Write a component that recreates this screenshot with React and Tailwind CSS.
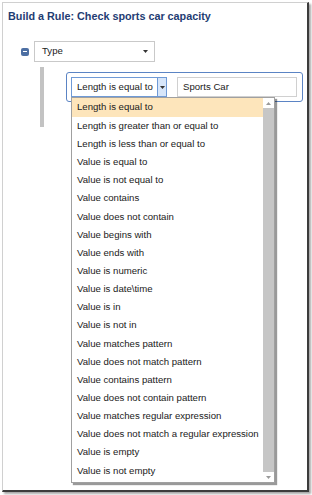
import React from "react";

const options = [
  "Length is equal to",
  "Length is greater than or equal to",
  "Length is less than or equal to",
  "Value is equal to",
  "Value is not equal to",
  "Value contains",
  "Value does not contain",
  "Value begins with",
  "Value ends with",
  "Value is numeric",
  "Value is date\\time",
  "Value is in",
  "Value is not in",
  "Value matches pattern",
  "Value does not match pattern",
  "Value contains pattern",
  "Value does not contain pattern",
  "Value matches regular expression",
  "Value does not match a regular expression",
  "Value is empty",
  "Value is not empty",
];

function Caret() {
  return (
    <svg width="5" height="3" viewBox="0 0 5 3">
      <path d="M0 0h5L2.5 3z" fill="#333" />
    </svg>
  );
}

export default function App() {
  return (
    <div
      className="w-[312px] h-[495px] bg-white pl-[2px] pt-[2px] text-[9.6px] text-[#1a1a1a]"
      style={{ fontFamily: '"Liberation Sans", Arial, sans-serif' }}
    >
      <div className="w-[307px] h-[490px] bg-white border-l border-t border-[#d0d0d0] border-r-2 border-b-2 border-r-[#3c3c3c] border-b-[#3c3c3c] shadow-[2px_2px_2px_rgba(0,0,0,0.35)]">
        <h1 className="pl-[5px] pt-[5px] text-[10.8px] font-bold text-[#1f3d73] leading-[16px]">
          Build a Rule: Check sports car capacity
        </h1>

        {/* type row */}
        <div className="flex items-center mt-[17px] pl-[18px]">
          <div className="w-[8px] h-[8px] rounded-[2px] bg-[#4d6fa3] flex items-center justify-center">
            <div className="w-[4px] h-[1px] bg-white" />
          </div>
          <div className="ml-[5px] w-[121px] h-[21px] border border-[#c9c9c9] flex items-center justify-between pl-[7px] pr-[6px]">
            <span>Type</span>
            <Caret />
          </div>
        </div>

        {/* tree branch */}
        <div className="flex mt-[5px] pl-[37px]">
          <div className="w-[4px] h-[60px] bg-[#c3c3c3]" />
          <div className="relative ml-[22px] mt-[5px] w-[237px] h-[30px] border border-[#5b84c4] rounded-[3px] flex items-center pl-[4px]">
            <div className="flex h-[20px] border border-[#6f9ad6]">
              <div className="w-[85px] flex items-center pl-[5px] bg-white whitespace-nowrap">Length is equal to</div>
              <div className="w-[9px] bg-[#d7e6fa] border-l border-[#6f9ad6] flex items-center justify-center">
                <Caret />
              </div>
            </div>
            <div className="ml-[10px] w-[120px] h-[20px] border border-[#d0d0d0] flex items-center pl-[5px]">
              Sports Car
            </div>

            {/* dropdown popup */}
            <div className="absolute left-[4px] top-[24px] w-[204px] h-[386px] bg-white border border-[#a0a0a0] shadow-[2px_2px_1px_rgba(0,0,0,0.4)] flex">
              <div className="flex-1 flex flex-col">
                {options.map((o, i) => (
                  <div
                    key={o}
                    className={
                      "h-[18.15px] flex items-center pl-[5px] whitespace-nowrap " +
                      (i === 0 ? "bg-[#fde5bb] h-[19px]" : "")
                    }
                  >
                    {o}
                  </div>
                ))}
              </div>
              <div className="w-[11px] flex flex-col bg-[#f0f0f0]">
                <div className="h-[10px] flex items-center justify-center bg-white">
                  <svg width="5" height="3" viewBox="0 0 5 3">
                    <path d="M0 3h5L2.5 0z" fill="#9a9a9a" />
                  </svg>
                </div>
                <div className="flex-1 bg-[#c6c6c6]" />
                <div className="h-[10px] flex items-center justify-center bg-white">
                  <svg width="5" height="3" viewBox="0 0 5 3">
                    <path d="M0 0h5L2.5 3z" fill="#9a9a9a" />
                  </svg>
                </div>
              </div>
            </div>
          </div>
        </div>
      </div>
    </div>
  );
}
